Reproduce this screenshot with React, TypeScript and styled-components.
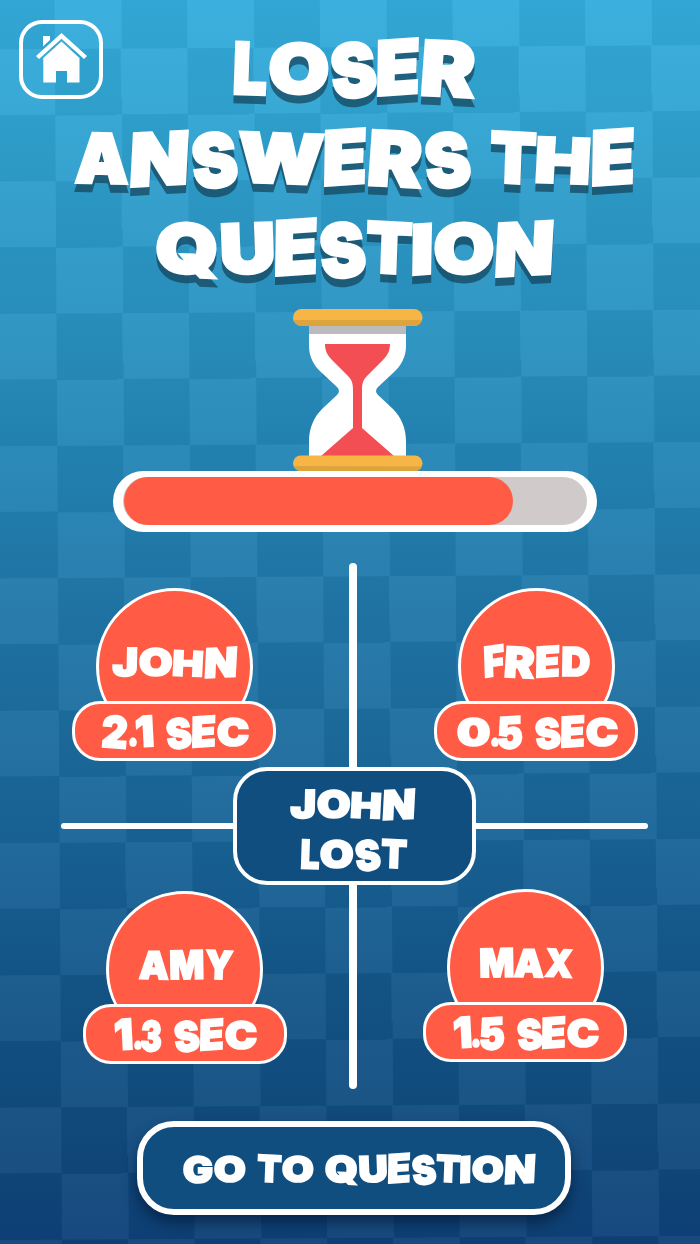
import React from 'react';
import styled, { createGlobalStyle } from 'styled-components';

const FONT = '"Inter", "Lato", "Liberation Sans", sans-serif';
const STROKE = 0.045;
const BASELINE = 0.864;

const GlobalStyle = createGlobalStyle`
  body { margin: 0; background: #0f4276; }
  *, *::before, *::after { box-sizing: border-box; }
`;

/* Comic lettering: every character is stretched and tilted in its own way.
   width / advance are in 1/68 em. */
type Shape = { w: number; adv?: number; sy?: number; dy?: number; rot?: number; kx?: number; ky?: number };

const SHAPES: Record<string, Shape> = {
  A: { w: 54, sy: 1.0, rot: 1 },
  C: { w: 57, sy: 1.02 },
  D: { w: 50, sy: 1.04, rot: 1 },
  E: { w: 42, adv: 45, sy: 1.09, dy: 1, rot: 1, ky: -5 },
  F: { w: 36, adv: 37, sy: 1.09, ky: -6, rot: -2, dy: 0 },
  G: { w: 56, adv: 59, sy: 1.04, dy: 2 },
  H: { w: 54, adv: 56, sy: 0.91, ky: 2, kx: -3 },
  I: { w: 20, adv: 22, sy: 1.0, ky: -5, rot: 1, dy: 1 },
  J: { w: 45, adv: 47, sy: 1.02, rot: 1 },
  L: { w: 33, adv: 35, sy: 1.04, rot: 2, dy: 1 },
  M: { w: 60, adv: 62, sy: 1.03, rot: -1 },
  N: { w: 57, adv: 61, sy: 1.06, kx: -3, ky: -3, dy: 2 },
  O: { w: 60, adv: 62, sy: 1 },
  Q: { w: 62, adv: 65, sy: 1, rot: 2 },
  R: { w: 54, adv: 56, sy: 1.1, dy: 3, rot: 3, kx: -1 },
  S: { w: 45, adv: 46, sy: 1.08, dy: 4, rot: -7 },
  T: { w: 46, adv: 46, sy: 1.02, rot: 3, kx: 1 },
  U: { w: 53, adv: 54, sy: 1.0, rot: -2 },
  W: { w: 86, adv: 86, sy: 1.0, rot: 2 },
  X: { w: 50, adv: 50, sy: 1.0, rot: 3 },
  Y: { w: 50, adv: 50, sy: 1.03, rot: 3 },
  '0': { w: 59, adv: 60, sy: 1.0 },
  '1': { w: 31, adv: 33, sy: 1.1, rot: -3, dy: 1 },
  '2': { w: 45, adv: 47, sy: 1.14, rot: 4, dy: 3 },
  '3': { w: 37, adv: 39, sy: 1.1, rot: 2, dy: 4 },
  '5': { w: 44, adv: 46, sy: 1.14, ky: -4, dy: 4 },
  '.': { w: 14, adv: 14, sy: 1 },
};

const pen = document.createElement('canvas').getContext('2d')!;

function fit(ch: string) {
  const s = SHAPES[ch] || { w: 40 };
  pen.font = `900 100px ${FONT}`;
  const m = pen.measureText(ch);
  const left = -m.actualBoundingBoxLeft / 100 - STROKE / 2;
  const ink = (m.actualBoundingBoxRight + m.actualBoundingBoxLeft) / 100 + STROKE;
  const w = s.w / 68;
  const sx = w / ink;
  const { sy = 1, dy = 0, rot = 0, kx = 0, ky = 0 } = s;
  return {
    width: `${(s.adv ?? s.w + 2) / 68}em`,
    transform:
      `translate(${w / 2}em, ${dy / 68 - 0.36}em) rotate(${rot}deg) skew(${kx}deg, ${ky}deg) ` +
      `translate(${-w / 2 - left * sx}em, 0.36em) scale(${sx}, ${sy})`,
  };
}

const Letter = styled.span`
  display: inline-block;
  line-height: 1;
  height: 1em;
  text-align: left;
  transform-origin: 0 ${BASELINE}em;
`;

const Space = styled.span`
  display: inline-block;
  width: 0.29em;
  white-space: pre;
`;

const Lettering = styled.div<{ $size: number; $line: number; $shift?: number }>`
  font: 900 ${p => p.$size}px/${p => p.$line}px ${FONT};
  color: #fff;
  white-space: nowrap;
  text-align: center;
  padding-left: ${p => p.$shift ?? 0}px;
  -webkit-text-stroke: ${STROKE}em #fff;
`;

function Comic({ text, size, line, shift }: { text: string; size: number; line: number; shift?: number }) {
  return (
    <Lettering $size={size} $line={line} $shift={shift}>
      {[...text].map((ch, i) =>
        ch === ' ' ? <Space key={i}> </Space> : <Letter key={i} style={fit(ch)}>{ch}</Letter>
      )}
    </Lettering>
  );
}

const Screen = styled.main`
  position: relative;
  isolation: isolate;
  overflow: hidden;
  width: 700px;
  height: 1244px;
  display: flex;
  flex-direction: column;
  background: linear-gradient(
    #32a6d4 0, #2f9fcb 100px, #2b94c1 220px, #278bb8 340px, #2280af 450px,
    #2077a6 560px, #1c6b9b 700px, #175f91 850px, #125182 1010px, #104a7b 1110px, #0e3f74 1244px
  );

  &::before {
    content: '';
    position: absolute;
    z-index: -1;
    left: -77.9px;
    top: -83px;
    width: 900px;
    height: 1400px;
    transform: rotate(-0.34deg);
    transform-origin: 77.9px 83px;
    background: repeating-conic-gradient(#0a0a0a 0 25%, transparent 0 50%) 0 0 / 132.6px 132.3px;
    mix-blend-mode: plus-lighter;
  }
`;

const Header = styled.header`
  display: grid;
  height: 309px;
`;

const HomeButton = styled.button`
  grid-area: 1 / 1;
  margin: 20px 0 0 19px;
  width: 84px;
  height: 79px;
  padding: 0;
  border: 4px solid #fff;
  border-radius: 23px;
  background: none;
  display: flex;
  justify-content: center;
`;

const Title = styled.h1`
  grid-area: 1 / 1;
  margin: 0;
  padding: 23px 0 0 12px;
  filter: drop-shadow(0 8px 0 rgba(20, 66, 88, 0.7));
  pointer-events: none;
`;

const Timer = styled.section`
  display: flex;
  flex-direction: column;
  align-items: flex-start;
  padding-left: 113px;
  height: 254px;
`;

const Glass = styled.svg`
  display: block;
  margin-left: 180px;
`;

const Track = styled.div`
  width: 484px;
  height: 61px;
  border: solid #fff;
  border-width: 6px 10px 7px;
  border-radius: 31px;
  background: #fff;
`;

const Rail = styled.div`
  height: 48px;
  padding-left: 1px;
  border-radius: 24px;
  background: #d0caca;
`;

const Fill = styled.div`
  height: 100%;
  border-radius: 24px;
  background: #ff5b45;
`;

const Board = styled.section`
  display: grid;
  grid-template: 263px 263px / 353px 347px;
`;

const Divider = styled.div<{ $vertical?: boolean }>`
  grid-area: 1 / 1 / -1 / -1;
  background: #fff;
  border-radius: 4px;
  align-self: ${p => (p.$vertical ? 'stretch' : 'center')};
  margin-left: ${p => (p.$vertical ? 349 : 61)}px;
  width: ${p => (p.$vertical ? 8 : 587)}px;
  height: ${p => (p.$vertical ? 'auto' : '6px')};
`;

const Verdict = styled.div`
  grid-area: 1 / 1 / -1 / -1;
  align-self: center;
  margin-left: 233px;
  width: 243px;
  height: 118px;
  padding: 8px 2px 0 0;
  border: 4px solid #fff;
  border-radius: 34px;
  background: #114e80;
`;

const PlayerCard = styled.article<{ $row: number; $col: number; $x: number; $y: number }>`
  grid-area: ${p => p.$row} / ${p => p.$col};
  margin: ${p => p.$y}px 0 0 ${p => p.$x}px;
  width: 204px;
  height: 173px;
  display: flex;
  flex-direction: column;
  align-items: center;
`;

const Disc = styled.div`
  width: 157px;
  height: 157px;
  flex: none;
  padding-top: 46px;
  border: 3px solid #fff;
  border-radius: 50%;
  background: #ff5b45;
`;

const TimePill = styled.div`
  position: relative;
  width: 204px;
  height: 60px;
  flex: none;
  margin-top: -44.5px;
  border: 3px solid #fff;
  border-radius: 28px;
  background: #ff5b45;
`;

const GoButton = styled.button`
  margin: 32px 0 0 137px;
  width: 434px;
  height: 94px;
  padding: 0;
  border: 6px solid #fff;
  border-radius: 37px;
  background: #114e80;
  box-shadow: 0 8px 14px rgba(4, 22, 48, 0.6);
`;

const players = [
  { name: 'JOHN', time: '2.1 SEC', row: 1, col: 1, x: 72, y: 25 },
  { name: 'FRED', time: '0.5 SEC', row: 1, col: 2, x: 81, y: 25 },
  { name: 'AMY', time: '1.3 SEC', row: 2, col: 1, x: 82.5, y: 65 },
  { name: 'MAX', time: '1.5 SEC', row: 2, col: 2, x: 70, y: 63 },
];

export default function App() {
  return (
    <Screen>
      <GlobalStyle />
      <Header>
        <HomeButton aria-label="Home">
          <svg width="52" height="71" viewBox="35 24 52 71" fill="#fff">
            <path d="M43 36h7v4l-7 6.500z" />
            <path d="M61.5 33 87 56l-3 3-22.500-20.300L39 59l-3-3z" />
            <path d="M61.500 41.500 79.500 58v24.500H67V71H56v11.500H43.300V58z" />
          </svg>
        </HomeButton>
        <Title>
          <Comic text="LOSER" size={68} line={90} />
          <Comic text="ANSWERS THE" size={68} line={90} />
          <Comic text="QUESTION" size={68} line={90} />
        </Title>
      </Header>
      <Timer>
        <Glass width="130" height="162" viewBox="0 0 130 162">
          <path
            fill="#fff"
            d="M16 12h97v25c0 11-5 20-13 27L85 78q-4 4 0 8l15 14c8 8 13 19 13 32v16H16v-16c0-13 5-24 13-32l15-14q4-4 0-8L29 64C21 57 16 48 16 37z"
          />
          <path fill="#bcbabd" d="M16 14h97v11H16z" />
          <path
            fill="#f24e54"
            d="M32 35h65c0 6-2 11-7 16L74 67c-4 4-5 8-5 14v38l32 28H28l32-28V81c0-6-1-10-5-14L39 51c-5-5-7-10-7-16z"
          />
          <rect y="0" width="129.500" height="17" rx="8.500" fill="#f6b545" />
          <path fill="#dda43d" d="M1 11h128q-2 6-8 6H8q-5 0-7-6z" />
          <rect y="146.500" width="129.500" height="15.500" rx="7.750" fill="#f6b545" />
          <path fill="#dda43d" d="M1 157l128 .5q-2 4.500-8 4.500H8q-5 0-7-5z" />
        </Glass>
        <Track>
          <Rail>
            <Fill style={{ width: '84%' }} />
          </Rail>
        </Track>
      </Timer>
      <Board>
        {players.map(p => (
          <PlayerCard key={p.name} $row={p.row} $col={p.col} $x={p.x} $y={p.y}>
            <Disc>
              <Comic text={p.name} size={38} line={50} shift={3} />
            </Disc>
            <TimePill>
              <Comic text={p.time} size={38} line={57} shift={4} />
            </TimePill>
          </PlayerCard>
        ))}
        <Divider $vertical />
        <Divider />
        <Verdict>
          <Comic text="JOHN" size={38} line={50} />
          <Comic text="LOST" size={38} line={50} />
        </Verdict>
      </Board>
      <GoButton>
        <Comic text="GO TO QUESTION" size={36} line={84} shift={12} />
      </GoButton>
    </Screen>
  );
}
